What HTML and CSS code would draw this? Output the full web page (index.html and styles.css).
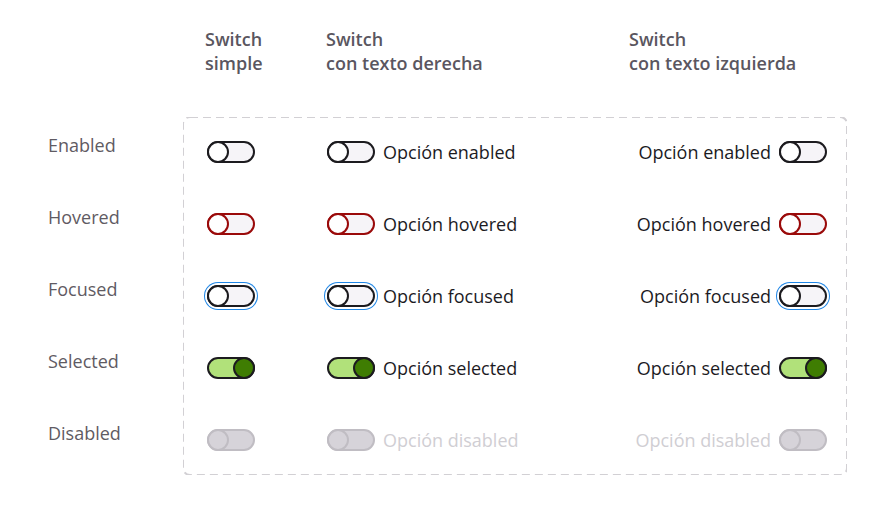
FILE: index.html
```html
<!DOCTYPE html>
<html lang="es">
<head>
    <meta charset="UTF-8">
    <meta name="viewport" content="width=device-width, initial-scale=1.0">
    <title>Switch - estados</title>
    <link rel="stylesheet" href="styles.css">
</head>
<body>

    <div class="page">
        <!-- Column titles -->
        <div class="heads">
            <div class="head">Switch<br>simple</div>
            <div class="head">Switch<br>con texto derecha</div>
            <div class="head">Switch<br>con texto izquierda</div>
        </div>

        <div class="main">
            <!-- State names -->
            <ul class="states">
                <li>Enabled</li>
                <li>Hovered</li>
                <li>Focused</li>
                <li>Selected</li>
                <li>Disabled</li>
            </ul>

            <div class="board">
                <svg class="board-frame" aria-hidden="true">
                    <rect x="0" y="0" width="100%" height="100%" rx="7" ry="7"></rect>
                </svg>

                <!-- Enabled -->
                <div class="cell"><span class="switch"><span class="knob"></span></span></div>
                <div class="cell"><span class="switch"><span class="knob"></span></span><span class="opt">Opción enabled</span></div>
                <div class="cell right"><span class="opt">Opción enabled</span><span class="switch"><span class="knob"></span></span></div>

                <!-- Hovered -->
                <div class="cell"><span class="switch hovered"><span class="knob"></span></span></div>
                <div class="cell"><span class="switch hovered"><span class="knob"></span></span><span class="opt">Opción hovered</span></div>
                <div class="cell right"><span class="opt">Opción hovered</span><span class="switch hovered"><span class="knob"></span></span></div>

                <!-- Focused -->
                <div class="cell"><span class="switch focused"><span class="knob"></span></span></div>
                <div class="cell"><span class="switch focused"><span class="knob"></span></span><span class="opt">Opción focused</span></div>
                <div class="cell right"><span class="opt">Opción focused</span><span class="switch focused"><span class="knob"></span></span></div>

                <!-- Selected -->
                <div class="cell"><span class="switch selected"><span class="knob"></span></span></div>
                <div class="cell"><span class="switch selected"><span class="knob"></span></span><span class="opt">Opción selected</span></div>
                <div class="cell right"><span class="opt">Opción selected</span><span class="switch selected"><span class="knob"></span></span></div>

                <!-- Disabled -->
                <div class="cell"><span class="switch disabled"><span class="knob"></span></span></div>
                <div class="cell"><span class="switch disabled"><span class="knob"></span></span><span class="opt disabled">Opción disabled</span></div>
                <div class="cell right"><span class="opt disabled">Opción disabled</span><span class="switch disabled"><span class="knob"></span></span></div>
            </div>
        </div>
    </div>

</body>
</html>
```

FILE: styles.css
```css
body {
    font-family: 'Open Sans', 'Noto Sans', sans-serif;
    margin: 0;
    padding: 0;
    background-color: #fff;
    color: #1c1b1f;
}
.page {
    padding-top: 27px;
}
.heads {
    display: grid;
    grid-template-columns: 121px 303px auto;
    padding-left: 205px;
}
.head {
    font-size: 18px;
    line-height: 24px;
    font-weight: 600;
    color: #5a5660;
}
.main {
    display: flex;
    align-items: flex-start;
    margin-top: 42px;
    padding-left: 48px;
}
.states {
    list-style: none;
    margin: 0;
    padding: 16px 0 0 0;
    width: 135px;
    display: grid;
    grid-auto-rows: 72px;
    align-content: start;
}
.states li {
    font-size: 18px;
    line-height: 24px;
    color: #5f5b63;
}
.board {
    position: relative;
    width: 664px;
    box-sizing: border-box;
    padding: 1px 20px 1px 24px;
    display: grid;
    grid-template-columns: 120px 1fr auto;
    grid-template-rows: repeat(4, 72px) 68px;
    align-items: start;
}
.board-frame {
    position: absolute;
    left: 0;
    top: 0;
    width: 100%;
    height: 100%;
    pointer-events: none;
}
.board-frame rect {
    fill: none;
    stroke: #d2d0d4;
    stroke-width: 2;
    stroke-dasharray: 8 5;
}
.cell {
    display: flex;
    align-items: center;
    gap: 8px;
    height: 24px;
    margin-top: 22px;
}
.cell.right {
    justify-content: flex-end;
}
.opt {
    font-size: 18px;
    line-height: 24px;
    color: #1c1b1f;
    white-space: nowrap;
}
.opt.disabled {
    color: #d0ced3;
}

/* Switch track and knob */
.switch {
    display: flex;
    align-items: center;
    flex: none;
    box-sizing: border-box;
    width: 48px;
    height: 22px;
    border: 2px solid #1c1b1f;
    border-radius: 11px;
    background-color: #f6f4f8;
}
.knob {
    flex: none;
    box-sizing: border-box;
    width: 22px;
    height: 22px;
    margin-left: -2px;
    border: 2px solid #1c1b1f;
    border-radius: 50%;
    background-color: #fff;
}
.switch.hovered,
.switch.hovered .knob {
    border-color: #9a0a0a;
}
.switch.focused {
    box-shadow: 0 0 0 2px #fff, 0 0 0 3px #1f86e6;
}
.switch.selected {
    background-color: #b1e17a;
}
.switch.selected .knob {
    margin-left: auto;
    margin-right: -2px;
    background-color: #3f7d02;
}
.switch.disabled {
    border-color: #c0bdc3;
    background-color: #d6d3d9;
}
.switch.disabled .knob {
    border-color: #c0bdc3;
    background-color: #d6d3d9;
}
```
